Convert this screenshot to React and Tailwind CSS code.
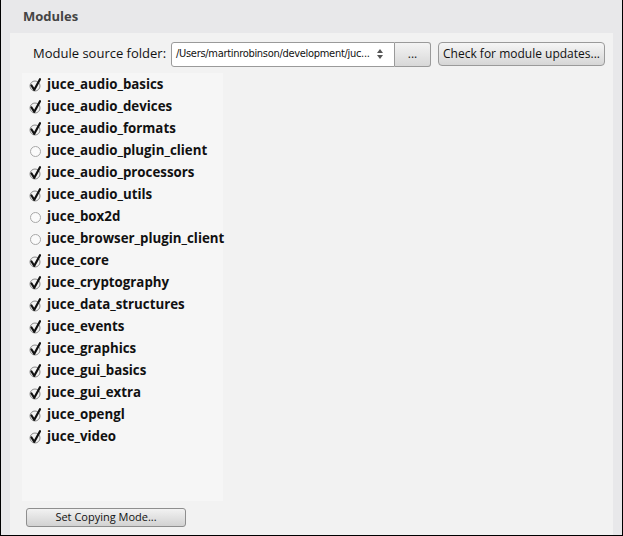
import React from "react";

const modules = [
    ["juce_audio_basics", true],
    ["juce_audio_devices", true],
    ["juce_audio_formats", true],
    ["juce_audio_plugin_client", false],
    ["juce_audio_processors", true],
    ["juce_audio_utils", true],
    ["juce_box2d", false],
    ["juce_browser_plugin_client", false],
    ["juce_core", true],
    ["juce_cryptography", true],
    ["juce_data_structures", true],
    ["juce_events", true],
    ["juce_graphics", true],
    ["juce_gui_basics", true],
    ["juce_gui_extra", true],
    ["juce_opengl", true],
    ["juce_video", true],
];

function Tick({ on }) {
    if (!on) {
        return <span className="w-[11px] h-[11px] rounded-full border border-[#a8a8a8] bg-[#fafafa]" />
    }
    return (
        <svg width="12" height="14" viewBox="0 0 12 14">
            <circle cx="6" cy="8" r="5" fill="#f4f4f4" stroke="#8a8a8a" strokeWidth="1" />
            <path d="M2.5 7.5 L5.3 11.8 L11 1.2" fill="none" stroke="#111" strokeWidth="2.2" strokeLinecap="round" strokeLinejoin="round" />
        </svg>
    )
}

export default function App() {
    return (
        <div className="w-[623px] h-[536px] bg-[#e8e8ea] border-l border-r border-b border-black flex flex-col" style={{ fontFamily: '"Open Sans", "DejaVu Sans", sans-serif' }}>
            <div className="h-[33px] pl-[22px] pt-[7px] text-[13px] font-bold text-[#444]">Modules</div>
            <div className="flex-1 mx-[9px] bg-[#f2f2f2] flex flex-col pl-[12px]">
                <div className="flex items-center h-[40px] pt-[2px]">
                    <span className="text-[13px] text-[#111] pl-[11px] w-[149px] whitespace-nowrap">Module source folder:</span>
                    <div className="flex items-center h-[25px] w-[224px] bg-white border border-[#9a9a9a] rounded-l-[3px]">
                        <span className="flex-1 pl-[4px] text-[11px] text-[#111] tracking-[-0.3px] whitespace-nowrap" style={{ fontFamily: '"Liberation Sans Narrow", "DejaVu Sans Condensed", sans-serif' }}>/Users/martinrobinson/development/juc...</span>
                        <svg width="10" height="14" viewBox="0 0 10 14" className="mr-[9px]">
                            <path d="M5 2 L8 6 L2 6 Z" fill="#555" />
                            <path d="M5 12 L8 8 L2 8 Z" fill="#555" />
                        </svg>
                    </div>
                    <div className="h-[25px] w-[36px] border border-l-0 border-[#9a9a9a] rounded-r-[3px] bg-gradient-to-b from-[#f4f4f4] to-[#d8d8d8] flex items-center justify-center text-[12px] text-[#222]">...</div>
                    <div className="ml-[7px] h-[24px] w-[167px] border border-[#9a9a9a] rounded-[4px] bg-gradient-to-b from-[#f6f6f6] to-[#d6d6d6] flex items-center justify-center text-[12px] text-[#111] whitespace-nowrap">Check for module updates...</div>
                </div>
                <div className="w-[201px] h-[428px] bg-[#f6f6f6] pt-[1px]">
                    {modules.map(([name, on]) => (
                        <div key={name} className="h-[22px] flex items-center whitespace-nowrap">
                            <span className="w-[25px] shrink-0 flex items-center justify-center pl-[1px]"><Tick on={on} /></span>
                            <span className="text-[13.3px] font-bold text-[#111]">{name}</span>
                        </div>
                    ))}
                </div>
                <div className="flex-1 flex items-center pl-[4px] pb-[1px]">
                    <div className="w-[160px] h-[19px] border border-[#8e8e8e] rounded-[3px] bg-gradient-to-b from-[#f2f2f2] to-[#d2d2d2] flex items-center justify-center text-[11px] text-[#111]">Set Copying Mode...</div>
                </div>
            </div>
        </div>
    )
}
